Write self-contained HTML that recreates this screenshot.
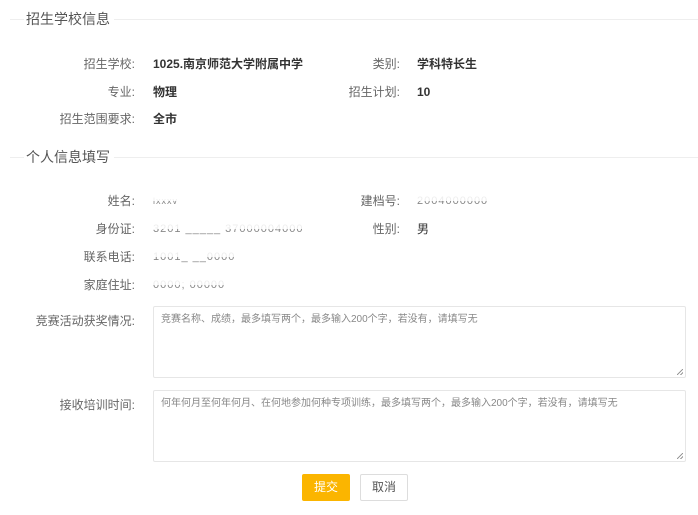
<!DOCTYPE html>
<html><head><meta charset="utf-8"><style>
*{margin:0;padding:0;box-sizing:border-box}
body{width:698px;height:515px;background:#fff;font-family:"Liberation Sans","Noto Sans CJK SC",sans-serif;position:relative;overflow:hidden;color:#333}
.a{position:absolute;white-space:nowrap}
.line{position:absolute;left:10px;right:0;height:1px;background:#eee}
.leg{position:absolute;background:#fff;padding:0 4px 0 2px;font-size:14px;color:#555;line-height:18px}
.lab{position:absolute;font-size:12px;color:#666;text-align:right;line-height:16px;white-space:nowrap}
.val{position:absolute;font-size:12px;color:#333;font-weight:bold;line-height:16px;white-space:nowrap}
.v2{position:absolute;font-size:12px;color:#333;line-height:16px;white-space:nowrap}
.blur{position:absolute;font-size:11px;color:#888;line-height:14px;height:14px;overflow:hidden;white-space:nowrap;letter-spacing:1px}
.blur::after{content:"";position:absolute;left:0;right:0;top:0;height:7px;background:rgba(255,255,255,.85)}
.ta{position:absolute;left:153px;width:533px;height:72px;border:1px solid #e6e6e6;border-radius:2px;font-size:10px;color:#888;padding:6px 7px;line-height:14px}
.ta::after{content:"";position:absolute;right:2px;bottom:2px;width:6px;height:6px;background:linear-gradient(135deg,transparent 45%,#999 45%,#999 55%,transparent 55%,transparent 75%,#999 75%,#999 85%,transparent 85%)}
</style></head><body>
<div class="line" style="top:19px"></div>
<div class="leg" style="left:24px;top:10px">招生学校信息</div>
<div class="lab" style="right:563px;top:56px">招生学校:</div>
<div class="val" style="left:153px;top:56px">1025.南京师范大学附属中学</div>
<div class="lab" style="right:298px;top:56px">类别:</div>
<div class="val" style="left:417px;top:56px">学科特长生</div>
<div class="lab" style="right:563px;top:84px">专业:</div>
<div class="val" style="left:153px;top:84px">物理</div>
<div class="lab" style="right:298px;top:84px">招生计划:</div>
<div class="val" style="left:417px;top:84px">10</div>
<div class="lab" style="right:563px;top:111px">招生范围要求:</div>
<div class="val" style="left:153px;top:111px">全市</div>

<div class="line" style="top:157px"></div>
<div class="leg" style="left:24px;top:148px">个人信息填写</div>
<div class="lab" style="right:563px;top:193px">姓名:</div>
<div class="blur" style="left:153px;top:194px;font-size:9px">lxxxv</div>
<div class="lab" style="right:298px;top:193px">建档号:</div>
<div class="blur" style="left:417px;top:194px">2004000000</div>
<div class="lab" style="right:563px;top:221px">身份证:</div>
<div class="blur" style="left:153px;top:222px">3201 _____ 37000004000</div>
<div class="lab" style="right:298px;top:221px">性别:</div>
<div class="v2" style="left:417px;top:221px">男</div>
<div class="lab" style="right:563px;top:249px">联系电话:</div>
<div class="blur" style="left:153px;top:250px">1001_ __0000</div>
<div class="lab" style="right:563px;top:277px">家庭住址:</div>
<div class="blur" style="left:153px;top:278px">0000; 00000</div>

<div class="lab" style="right:563px;top:313px">竞赛活动获奖情况:</div>
<div class="ta" style="top:306px">竞赛名称、成绩，最多填写两个，最多输入200个字，若没有，请填写无</div>
<div class="lab" style="right:563px;top:397px">接收培训时间:</div>
<div class="ta" style="top:390px">何年何月至何年何月、在何地参加何种专项训练，最多填写两个，最多输入200个字，若没有，请填写无</div>

<div class="a" style="left:302px;top:474px;width:48px;height:27px;background:#fbb500;border-radius:2px;color:#fff;font-size:12px;line-height:27px;text-align:center">提交</div>
<div class="a" style="left:360px;top:474px;width:48px;height:27px;border:1px solid #ddd;border-radius:2px;color:#555;font-size:12px;line-height:25px;text-align:center;background:#fff">取消</div>
</body></html>
